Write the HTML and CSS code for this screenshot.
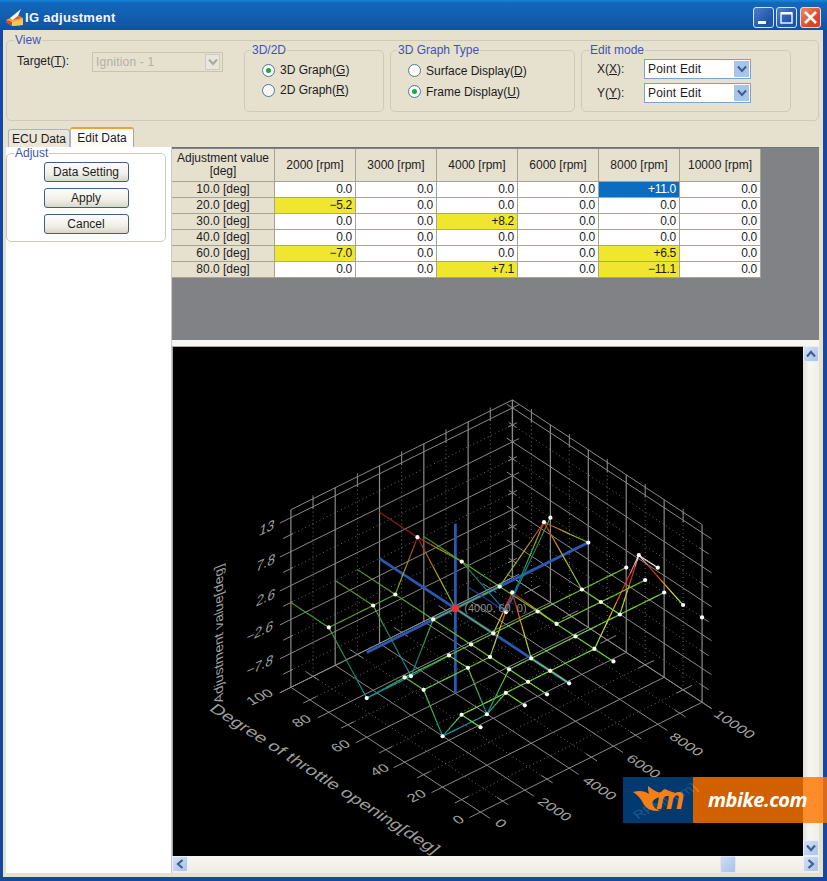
FILE: index.html
```html
<!DOCTYPE html>
<html lang="en">
<head>
<meta charset="utf-8">
<title>IG adjustment</title>
<link rel="stylesheet" href="styles.css">
</head>
<body>
<div class="window">
  <header class="titlebar">
    <svg class="app-icon" viewBox="0 0 20 20" width="20" height="20">
      <path d="M1 13 L12 8 L18 11 L18 18 L7 19 L1 15 Z" fill="#f4a23c"/>
      <path d="M1 13 L7 15 L7 19 L1 15 Z" fill="#d8452c"/>
      <path d="M7 15 L18 12 L18 18 L7 19 Z" fill="#f9c55c"/>
      <path d="M5 11 L16 2 L13 9 L8 13 Z" fill="#f6f2ea"/>
      <path d="M8 13 L13 9 L16 11 Z" fill="#e0542e"/>
    </svg>
    <span class="title">IG adjustment</span>
    <div class="winbtns">
      <div class="winbtn">
        <svg viewBox="0 0 19 19" width="19" height="19"><rect x="4" y="13" width="8" height="3" fill="#fff"/></svg>
      </div>
      <div class="winbtn">
        <svg viewBox="0 0 19 19" width="19" height="19"><rect x="4" y="5" width="11" height="10" fill="none" stroke="#e8effa" stroke-width="1.5"/><rect x="4" y="4" width="11" height="2.5" fill="#fff"/></svg>
      </div>
      <div class="winbtn close">
        <svg viewBox="0 0 19 19" width="19" height="19"><path d="M4 4 L15 15 M15 4 L4 15" stroke="#fff" stroke-width="2.6" fill="none"/></svg>
      </div>
    </div>
  </header>

  <div class="client">
    <fieldset class="group view">
      <legend>View</legend>
      <div class="view-row">
        <div class="target">
          <span class="target-label">Target(<u>T</u>):</span>
          <div class="combo disabled">
            <span>Ignition - 1</span>
            <span class="combo-btn">
              <svg viewBox="0 0 10 8" width="10" height="8"><path d="M1 1.5 L5 6 L9 1.5" fill="none" stroke="#a8a8a0" stroke-width="2"/></svg>
            </span>
          </div>
        </div>
        <fieldset class="group sub g-dim">
          <legend>3D/2D</legend>
          <label class="radio"><span class="dot on"></span>3D Graph(<u>G</u>)</label>
          <label class="radio"><span class="dot"></span>2D Graph(<u>R</u>)</label>
        </fieldset>
        <fieldset class="group sub g-type">
          <legend>3D Graph Type</legend>
          <label class="radio"><span class="dot"></span>Surface Display(<u>D</u>)</label>
          <label class="radio"><span class="dot on"></span>Frame Display(<u>U</u>)</label>
        </fieldset>
        <fieldset class="group sub g-edit">
          <legend>Edit mode</legend>
          <div class="edit-row">
            <span class="edit-label">X(<u>X</u>):</span>
            <div class="combo active">
              <span>Point Edit</span>
              <span class="combo-btn">
                <svg viewBox="0 0 10 8" width="10" height="8"><path d="M1 1.5 L5 6 L9 1.5" fill="none" stroke="#3c5c90" stroke-width="2"/></svg>
              </span>
            </div>
          </div>
          <div class="edit-row">
            <span class="edit-label">Y(<u>Y</u>):</span>
            <div class="combo active">
              <span>Point Edit</span>
              <span class="combo-btn">
                <svg viewBox="0 0 10 8" width="10" height="8"><path d="M1 1.5 L5 6 L9 1.5" fill="none" stroke="#3c5c90" stroke-width="2"/></svg>
              </span>
            </div>
          </div>
        </fieldset>
      </div>
    </fieldset>

    <nav class="tabs">
      <div class="tab">ECU Data</div>
      <div class="tab selected">Edit Data</div>
    </nav>

    <div class="main">
      <aside class="side">
        <fieldset class="group adjust">
          <legend>Adjust</legend>
          <button class="btn">Data Setting</button>
          <button class="btn">Apply</button>
          <button class="btn">Cancel</button>
        </fieldset>
      </aside>

      <section class="content">
        <div class="grid-area">
          <table class="data">
            <colgroup>
              <col class="c-head"><col class="c-val"><col class="c-val"><col class="c-val"><col class="c-val"><col class="c-val"><col class="c-val">
            </colgroup>
            <thead>
              <tr>
                <th>Adjustment value<br>[deg]</th>
                <th>2000 [rpm]</th><th>3000 [rpm]</th><th>4000 [rpm]</th><th>6000 [rpm]</th><th>8000 [rpm]</th><th>10000 [rpm]</th>
              </tr>
            </thead>
            <tbody>
              <tr><th>10.0 [deg]</th><td>0.0</td><td>0.0</td><td>0.0</td><td>0.0</td><td class="sel">+11.0</td><td>0.0</td></tr>
              <tr><th>20.0 [deg]</th><td class="mod">−5.2</td><td>0.0</td><td>0.0</td><td>0.0</td><td>0.0</td><td>0.0</td></tr>
              <tr><th>30.0 [deg]</th><td>0.0</td><td>0.0</td><td class="mod">+8.2</td><td>0.0</td><td>0.0</td><td>0.0</td></tr>
              <tr><th>40.0 [deg]</th><td>0.0</td><td>0.0</td><td>0.0</td><td>0.0</td><td>0.0</td><td>0.0</td></tr>
              <tr><th>60.0 [deg]</th><td class="mod">−7.0</td><td>0.0</td><td>0.0</td><td>0.0</td><td class="mod">+6.5</td><td>0.0</td></tr>
              <tr><th>80.0 [deg]</th><td>0.0</td><td>0.0</td><td class="mod">+7.1</td><td>0.0</td><td class="mod">−11.1</td><td>0.0</td></tr>
            </tbody>
          </table>
        </div>

        <div class="chart-row">
          <svg id="chart" class="chart" viewBox="172 346 631 510" width="631" height="510"></svg>
          <div class="vbar">
            <div class="sbtn">
              <svg viewBox="0 0 10 8" width="10" height="8"><path d="M1 6.5 L5 2 L9 6.5" fill="none" stroke="#3f5f90" stroke-width="2.2"/></svg>
            </div>
            <div class="sbtn">
              <svg viewBox="0 0 10 8" width="10" height="8"><path d="M1 1.5 L5 6 L9 1.5" fill="none" stroke="#3f5f90" stroke-width="2.2"/></svg>
            </div>
          </div>
        </div>
        <div class="hbar">
          <div class="sbtn">
            <svg viewBox="0 0 8 10" width="8" height="10"><path d="M6.5 1 L2 5 L6.5 9" fill="none" stroke="#3f5f90" stroke-width="2.2"/></svg>
          </div>
          <div class="thumb"></div>
          <div class="sbtn">
            <svg viewBox="0 0 8 10" width="8" height="10"><path d="M1.5 1 L6 5 L1.5 9" fill="none" stroke="#3f5f90" stroke-width="2.2"/></svg>
          </div>
        </div>
      </section>
    </div>
  </div>

  <div class="banner">
    <div class="banner-logo">
      <svg class="flame" viewBox="0 0 70 46" width="70" height="46">
        <path d="M10 15 C16 13 22 14 26 17 C25 14 25 11 25 9 C29 12 33 15 38 16 C38 14 40 13 42 12 C45 14 50 15 56 17 L38 20 C32 21 28 24 30 28 C31 31 34 33 38 33 L34 34 C28 34 22 31 20 26 C18 22 15 18 10 15 Z" fill="#f57f17"/>
      </svg>
      <span class="logo-m">m</span>
    </div>
    <div class="banner-name">mbike.com</div>
  </div>
</div>
<script src="chart.js"></script>
</body>
</html>
```

FILE: styles.css
```css
* { box-sizing: border-box; }
html, body { margin: 0; padding: 0; }
body {
  font-family: "Liberation Sans", Arial, sans-serif;
  font-size: 12px;
  color: #1c1c1c;
  background: #1a55b0;
}
.window {
  position: relative;
  width: 827px;
  height: 881px;
  display: flex;
  flex-direction: column;
  overflow: hidden;
  background: #17489f;
  padding: 0 4px 4px 3px;
}
.titlebar {
  height: 30px;
  margin: 0 -4px 0 -3px;
  padding: 4px 6px 0 5px;
  display: flex;
  align-items: center;
  background: linear-gradient(#1687d8 0, #1167bb 3px, #135fb0 14px, #0f52a6 100%);
}
.app-icon { flex: none; }
.title {
  color: #f4f6fa;
  font-weight: bold;
  font-size: 13px;
  letter-spacing: .3px;
}
.winbtns { margin-left: auto; display: flex; gap: 2px; }
.winbtn {
  width: 21px;
  height: 21px;
  border: 1px solid #d6e2f4;
  border-radius: 3px;
  background: linear-gradient(135deg, #4d80c8, #1e55ac 70%);
}
.winbtn svg { display: block; }
.winbtn.close { background: linear-gradient(135deg, #ef8a60, #dc4324 70%); margin-left: 1px; }

.client {
  flex: 1;
  min-height: 0;
  display: flex;
  flex-direction: column;
  background: #e6e0cf;
  padding-bottom: 4px;
}
.group {
  margin: 0;
  min-width: 0;
  border: 1px solid #cfcab8;
  border-radius: 5px;
  padding: 0;
}
.group legend {
  padding: 0 1px;
  margin-left: 7px;
  color: #3c55b4;
  font-size: 12px;
  line-height: 14px;
}
.view { margin: 3px 0 0 3px; width: 813px; height: 88px; }
.view-row { display: flex; gap: 6px; margin-top: -4px; }
.target {
  flex: none;
  width: 235px;
  padding: 9px 0 0 10px;
  display: flex;
  align-items: flex-start;
  margin-right: -4px;
}
.target-label { width: 75px; padding-top: 2px; font-size: 12px; }
.sub { flex: none; height: 69px; }
.g-dim { width: 140px; padding: 3px 0 0 17px; }
.g-type { width: 185px; padding: 3px 0 0 17px; }
.g-edit { width: 210px; padding: 2px 0 0 15px; }
.g-dim legend, .g-type legend { margin-left: -11px; }
.g-edit legend { margin-left: -8px; }
.radio { display: flex; align-items: center; height: 20px; white-space: nowrap; }
.g-type .radio { height: 21px; }
.dot {
  flex: none;
  width: 13px;
  height: 13px;
  margin-right: 5px;
  border-radius: 50%;
  border: 1.5px solid #4f7896;
  background: #fbfaf5;
  display: flex;
  align-items: center;
  justify-content: center;
}
.dot.on::after {
  content: "";
  width: 5px;
  height: 5px;
  border-radius: 50%;
  background: #12a84c;
}
.combo {
  display: flex;
  align-items: center;
  justify-content: space-between;
  background: #fff;
  font-size: 12px;
  letter-spacing: .2px;
}
.combo.disabled {
  width: 131px;
  height: 20px;
  padding: 0 2px 0 3px;
  background: #e6e0cf;
  color: #b3b0a5;
  border: 1px solid #c8c4b4;
}
.combo.disabled .combo-btn { background: #e9e7dc; border: 1px solid #cdcac0; }
.combo.active {
  width: 107px;
  height: 20px;
  padding: 0 1px 0 3px;
  border: 1px solid #7fa3c6;
}
.combo-btn {
  width: 15px;
  height: 16px;
  display: flex;
  align-items: center;
  justify-content: center;
}
.combo.active .combo-btn { background: #a9c4e6; }
.edit-row { display: flex; align-items: center; height: 20px; margin-bottom: 4px; }
.edit-label { width: 47px; }

.tabs { display: flex; align-items: flex-end; height: 20px; margin-top: 6px; padding-left: 5px; }
.tab {
  width: 62px;
  height: 18px;
  text-align: center;
  line-height: 18px;
  background: #ebe6d7;
  border: 1px solid #a9b4bd;
  border-bottom: 0;
  border-radius: 3px 3px 0 0;
}
.tab.selected {
  width: 64px;
  height: 20px;
  line-height: 19px;
  background: #fcfbf6;
  border-top: 2px solid #f0a030;
  border-right-color: #9aa4ac;
}

.main { flex: 1; min-height: 0; display: flex; }
.side {
  flex: none;
  width: 166px;
  margin-left: 3px;
  background: #fff;
  border-right: 1px solid #c8c8c4;
}
.adjust {
  width: 160px;
  height: 95px;
  padding-top: 2px;
  display: flex;
  flex-direction: column;
  align-items: center;
  gap: 6px;
}
.adjust legend { margin-left: 7px; line-height: 13px; }
.btn {
  width: 85px;
  height: 20px;
  padding: 0;
  font: 12px "Liberation Sans", Arial, sans-serif;
  color: #1c1c1c;
  border: 1px solid #3f5d8e;
  border-radius: 3px;
  background: linear-gradient(#fdfdfb, #f1efe8 60%, #d9d6cb);
}
.adjust button { margin: 0; }

.content { flex: none; width: 647px; display: flex; flex-direction: column; background: #f6f5f0; }
.grid-area {
  height: 193px;
  flex: none;
  margin-bottom: 6px;
  padding-top: 1px;
  background: #808285;
  border-top: 1px solid #6e7072;
}
.data { border-collapse: separate; border-spacing: 0; table-layout: fixed; width: 589px; }
.c-head { width: 103px; }
.c-val { width: 81px; }
.data th, .data td {
  padding: 0;
  height: 16px;
  font-size: 12px;
  font-weight: normal;
  line-height: 13px;
  border-right: 1px solid #a8a294;
  border-bottom: 1px solid #a8a294;
}
.data th { background: #e6e0cf; text-align: center; }
.data thead th { height: 33px; }
.data td { background: #fff; text-align: right; padding-right: 3px; letter-spacing: -.3px; }
.data td.mod { background: #f0e62e; }
.data td.sel { background: #0b6cc0; color: #fff; }

.chart-row { flex: none; height: 510px; display: flex; }
.chart { display: block; flex: none; background: #000; border-left: 1px solid #a8a8a8; border-top: 1px solid #a8a8a8; }
.vbar {
  flex: none;
  width: 16px;
  display: flex;
  flex-direction: column;
  justify-content: space-between;
  background: linear-gradient(90deg, #e4e1d6, #f7f6f0 40%, #f1efe6);
}
.hbar {
  flex: none;
  height: 17px;
  display: flex;
  justify-content: space-between;
  background: linear-gradient(#f7f6f0, #efece3);
  position: relative;
}
.sbtn {
  flex: none;
  width: 16px;
  height: 16px;
  display: flex;
  align-items: center;
  justify-content: center;
  background: linear-gradient(135deg, #d5e2f5, #a8c2e8);
  border: 1px solid #e9eef8;
  border-radius: 2px;
}
.thumb {
  position: absolute;
  left: 548px;
  top: 0;
  width: 16px;
  height: 17px;
  background: linear-gradient(135deg, #cfdef3, #a8c2e8);
  border: 1px solid #dfe7f4;
  border-radius: 2px;
}

.banner {
  position: absolute;
  left: 623px;
  top: 777px;
  width: 204px;
  height: 46px;
  display: flex;
}
.banner-logo {
  flex: none;
  width: 70px;
  position: relative;
  background: rgba(0, 71, 137, .82);
}
.flame { position: absolute; left: 0; top: 0; }
.logo-m {
  position: absolute;
  left: 33px;
  top: 2px;
  color: #f57f17;
  font: italic bold 32px/38px "Liberation Sans", sans-serif;
}
.banner-name {
  flex: 1;
  background: rgba(255, 117, 0, .82);
  color: #fff;
  font: italic bold 20px/46px "Open Sans", "Liberation Sans", sans-serif;
  padding-left: 15px;
  letter-spacing: -.5px;
}
```

FILE: chart.js
```js
// Draws the 3D frame graph of the ignition adjustment map.
(function () {
  var NS = "http://www.w3.org/2000/svg";
  var svg = document.getElementById("chart");
  var O = [480, 812], U = [222, -110], V = [-190, -125], Zh = 170;

  function P(u, v, z) {
    return [O[0] + U[0] * u + V[0] * v, O[1] + U[1] * u + V[1] * v - Zh * z];
  }
  function el(name, attrs, text) {
    var e = document.createElementNS(NS, name);
    for (var k in attrs) e.setAttribute(k, attrs[k]);
    if (text) e.textContent = text;
    svg.appendChild(e);
    return e;
  }
  function line(a, b, stroke, width, dash) {
    var at = { x1: a[0], y1: a[1], x2: b[0], y2: b[1], stroke: stroke, "stroke-width": width || 1 };
    if (dash) at["stroke-dasharray"] = dash;
    el("line", at);
  }

  var MAJ = "#8a8a8a", MIN = "#6e6e6e", DOT = "1 3", ZTOP = 1.047;
  var i, t;

  // floor: major and dotted grid, with overhanging ticks
  for (i = 0; i <= 10; i++) {
    t = i / 10;
    if (i % 2 === 0) {
      line(P(t, -0.05, 0), P(t, 1, 0), MAJ);
      line(P(-0.05, t, 0), P(1, t, 0), MAJ);
    } else {
      line(P(t, 0, 0), P(t, 1, 0), MIN, 1, DOT);
      line(P(0, t, 0), P(1, t, 0), MIN, 1, DOT);
      line(P(t, -0.03, 0), P(t, 0.03, 0), MAJ);
      line(P(-0.03, t, 0), P(0.03, t, 0), MAJ);
      line(P(t, 0.97, 0), P(t, 1.04, 0), MAJ);
      line(P(0.97, t, 0), P(1.04, t, 0), MAJ);
    }
  }

  // back walls: verticals
  for (i = 0; i <= 10; i++) {
    t = i / 10;
    if (i % 2 === 0) {
      line(P(t, 1, 0), P(t, 1, ZTOP), MAJ, 1.2);
      line(P(1, t, 0), P(1, t, ZTOP), MAJ, 1.2);
    } else {
      line(P(t, 1, 0), P(t, 1, ZTOP), MIN, 1, DOT);
      line(P(1, t, 0), P(1, t, ZTOP), MIN, 1, DOT);
      line(P(t, 1, ZTOP - 0.06), P(t, 1, ZTOP + 0.02), MAJ);
      line(P(1, t, ZTOP - 0.06), P(1, t, ZTOP + 0.02), MAJ);
    }
  }
  // back walls: levels
  for (i = 0; i <= 10; i++) {
    t = i / 10;
    if (i % 2 === 0) {
      line(P(-0.05, 1, t), P(1.03, 1, t), MAJ);
      line(P(1, 1.03, t), P(1, -0.05, t), MAJ);
    } else {
      line(P(0, 1, t), P(1, 1, t), MIN, 1, DOT);
      line(P(1, 1, t), P(1, 0, t), MIN, 1, DOT);
      line(P(-0.035, 1, t), P(0.01, 1, t), MAJ);
      line(P(1, -0.035, t), P(1, 0.01, t), MAJ);
      line(P(0.98, 1, t), P(1.02, 1, t), MAJ);
      line(P(1, 0.98, t), P(1, 1.02, t), MAJ);
    }
  }
  line(P(0, 1, ZTOP), P(1, 1, ZTOP), MAJ);
  line(P(1, 1, ZTOP), P(1, 0, ZTOP), MAJ);

  // labels
  function label(txt, x, y, m, size, col) {
    el("text", {
      transform: "matrix(" + m.concat([x, y]).join(" ") + ")",
      "text-anchor": "middle",
      "font-family": "Liberation Sans, Arial, sans-serif",
      "font-size": size,
      fill: col || "#a2a2a2"
    }, txt);
  }
  var wall = [0.9, -0.42, -0.18, 1];
  var floorA = [0.9, -0.42, 0.62, 0.62];
  var floorB = [0.84, 0.54, -0.62, 0.52];
  [["13", 265, 532], ["7.8", 264, 567], ["2.6", 264, 602], ["−2.6", 258, 636], ["−7.8", 258, 670]].forEach(function (l) {
    label(l[0], l[1], l[2], wall, 15);
  });
  [["100", 262, 700], ["80", 304, 724], ["60", 343, 749], ["40", 382, 773], ["20", 419, 799], ["0", 461, 823]].forEach(function (l) {
    label(l[0], l[1], l[2], floorA, 15.5);
  });
  [["0", 497, 826], ["2000", 551, 812], ["4000", 596, 791], ["6000", 640, 769], ["8000", 683, 747], ["10000", 731, 727]].forEach(function (l) {
    label(l[0], l[1], l[2], floorB, 16);
  });
  label("Degree of throttle opening[deg]", 320, 782, floorB, 19.5, "#9c9c9c");
  label("Adjustment value[deg]", 222, 632, [0, -1, 0.9, -0.35], 14);
  label("RPM[rpm]", 668, 804, [0.9, -0.45, 0.6, 0.6], 15);

  // axes through the selected point
  var AX = "#2a58b4";
  var u0 = 0.4, v0 = 0.6, z0 = 0.5;
  line(P(u0, v0, 0), P(u0, v0, 1), AX, 2.8);
  line(P(0, v0, z0), P(1, v0, z0), AX, 2.8);
  line(P(u0, 1, z0), P(u0, 0, z0), AX, 2.8);

  // data map (columns: rpm, rows: deg), edge rows and columns repeat their neighbours
  var rpm = [0, 2000, 3000, 4000, 6000, 8000, 10000];
  var deg = [0, 10, 20, 30, 40, 60, 80, 100];
  var table = {
    10: [0, 0, 0, 0, 11, 0],
    20: [-5.2, 0, 0, 0, 0, 0],
    30: [0, 0, 8.2, 0, 0, 0],
    40: [0, 0, 0, 0, 0, 0],
    60: [-7, 0, 0, 0, 6.5, 0],
    80: [0, 0, 7.1, 0, -11.1, 0]
  };
  function val(ri, di) {
    var d = deg[di];
    if (d === 0) d = 10;
    if (d === 100) d = 80;
    return table[d][Math.max(ri - 1, 0)];
  }
  function pt(ri, di) {
    return [rpm[ri] / 10000, deg[di] / 100, (val(ri, di) + 13) / 26];
  }

  var stops = [
    [-1, 32, 80, 255], [-0.8, 40, 110, 220], [-0.55, 30, 200, 235], [-0.35, 20, 170, 150], [0, 130, 235, 60],
    [0.22, 245, 235, 50], [0.38, 250, 150, 35], [0.52, 235, 45, 35], [0.62, 215, 40, 40], [0.85, 255, 255, 255], [1, 255, 255, 255]
  ];
  function colour(v, depth) {
    var t = v / 13, s = stops, j = 0;
    while (j < s.length - 2 && t > s[j + 1][0]) j++;
    var f = Math.max(0, Math.min(1, (t - s[j][0]) / (s[j + 1][0] - s[j][0])));
    var shade = 1 - 0.38 * depth;
    return "rgb(" + [1, 2, 3].map(function (c) {
      return Math.round((s[j][c] + (s[j + 1][c] - s[j][c]) * f) * shade);
    }).join(",") + ")";
  }
  function segment(a, b, va, vb) {
    var n = 10;
    for (var q = 0; q < n; q++) {
      var f0 = q / n, f1 = (q + 1) / n, f = (f0 + f1) / 2;
      var p0 = P(a[0] + (b[0] - a[0]) * f0, a[1] + (b[1] - a[1]) * f0, a[2] + (b[2] - a[2]) * f0);
      var p1 = P(a[0] + (b[0] - a[0]) * f1, a[1] + (b[1] - a[1]) * f1, a[2] + (b[2] - a[2]) * f1);
      line(p0, p1, colour(va + (vb - va) * f, a[1] + (b[1] - a[1]) * f), 1.2);
    }
  }
  var ri, di;
  for (di = 1; di <= 6; di++) {
    for (ri = 0; ri < rpm.length - 1; ri++) {
      segment(pt(ri, di), pt(ri + 1, di), val(ri, di), val(ri + 1, di));
    }
  }
  for (ri = 0; ri < rpm.length - 1; ri++) {
    for (di = 0; di < deg.length - 1; di++) {
      segment(pt(ri, di), pt(ri, di + 1), val(ri, di), val(ri, di + 1));
    }
  }
  for (ri = 0; ri < rpm.length; ri++) {
    for (di = 0; di < deg.length - 1; di++) {
      var p = pt(ri, di), s = P(p[0], p[1], p[2]);
      el("circle", { cx: s[0], cy: s[1], r: 2.1, fill: "#fff" });
    }
  }

  // selected point marker and its caption
  var c = P(u0, v0, z0);
  el("circle", { cx: c[0], cy: c[1], r: 3.8, fill: "#ee3030" });
  el("text", {
    x: c[0] + 9, y: c[1] + 4,
    "font-family": "Liberation Sans, Arial, sans-serif",
    "font-size": 11, fill: "#8c8c8c"
  }, "(4000, 60, 0)");
})();
```
